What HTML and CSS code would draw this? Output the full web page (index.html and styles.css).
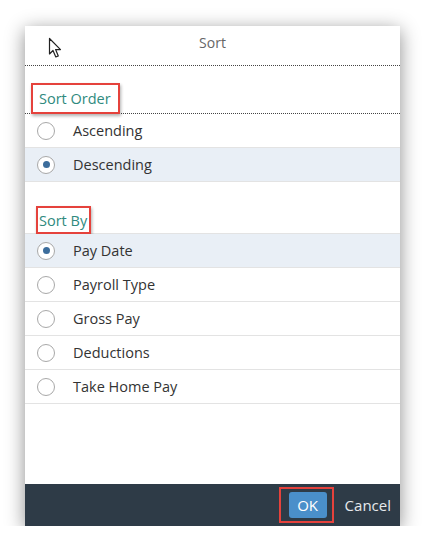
FILE: index.html
```html
<!DOCTYPE html>
<html lang="en">
<head>
    <meta charset="UTF-8">
    <title>Sort</title>
    <link rel="stylesheet" href="styles.css">
</head>
<body>
    <div class="dialogo">
        <div class="cabecera">
            <svg class="puntero" width="16" height="22" viewBox="0 0 16 22">
                <path d="M1.5 1.5 L1.5 17 L5 13.5 L7.8 20 L10.3 18.9 L7.6 12.6 L12.5 12.6 Z" fill="#fff" stroke="#222" stroke-width="1.2" stroke-linejoin="round"/>
            </svg>
            <span class="titulo">Sort</span>
        </div>

        <div class="seccion primera">
            <span class="etiqueta marcada">Sort Order</span>
        </div>
        <div class="fila"><span class="radio"></span>Ascending</div>
        <div class="fila activa"><span class="radio on"></span>Descending</div>

        <div class="seccion segunda">
            <span class="etiqueta marcada">Sort By</span>
        </div>
        <div class="fila activa"><span class="radio on"></span>Pay Date</div>
        <div class="fila"><span class="radio"></span>Payroll Type</div>
        <div class="fila"><span class="radio"></span>Gross Pay</div>
        <div class="fila"><span class="radio"></span>Deductions</div>
        <div class="fila"><span class="radio"></span>Take Home Pay</div>

        <div class="relleno"></div>

        <div class="pie">
            <div class="marco-ok"><button class="boton-ok">OK</button></div>
            <button class="boton-cancelar">Cancel</button>
        </div>
    </div>
</body>
</html>
```
FILE: styles.css
```css
body {
    margin: 0;
    background: #ffffff;
    font-family: "Open Sans", "Noto Sans", sans-serif;
}

.dialogo {
    margin: 26px 0 0 25px;
    width: 375px;
    height: 500px;
    background: #ffffff;
    box-shadow: 0 4px 18px rgba(0, 0, 0, 0.45);
    display: flex;
    flex-direction: column;
}

.cabecera {
    height: 39px;
    display: flex;
    align-items: center;
    justify-content: center;
    border-bottom: 1px dotted #444;
    position: relative;
}

.puntero {
    position: absolute;
    left: 23px;
    top: 11px;
}

.titulo {
    font-size: 14px;
    color: #666;
    margin-top: -7px;
}

.seccion {
    display: flex;
    align-items: flex-end;
    padding-left: 6px;
    border-bottom: 1px dotted #444;
}

.seccion.primera {
    height: 47px;
}

.seccion.segunda {
    height: 51px;
    border-bottom: 1px solid #e3e3e3;
    padding-left: 11px;
}

.etiqueta {
    font-size: 14.5px;
    color: #2f8a7e;
}

.marcada {
    border: 2px solid #e5423c;
    padding: 4px 7px 4px 6px;
    box-shadow: 1px 2px 3px rgba(0, 0, 0, 0.3);
    margin-bottom: -1px;
}

.segunda .marcada {
    padding: 3px 2px 2px 1px;
}

.fila {
    height: 33px;
    display: flex;
    align-items: center;
    font-size: 14.5px;
    color: #333;
    border-bottom: 1px solid #e3e3e3;
}

.fila.activa {
    background: #e9eff6;
}

.radio {
    width: 16px;
    height: 16px;
    border: 1.5px solid #a8a8a8;
    border-radius: 50%;
    background: #fff;
    margin: 0 18px 0 12px;
    display: flex;
    align-items: center;
    justify-content: center;
}

.radio.on::after {
    content: "";
    width: 7px;
    height: 7px;
    border-radius: 50%;
    background: #3c6d9c;
}

.relleno {
    flex: 1;
}

.pie {
    height: 42px;
    background: #2e3b47;
    display: flex;
    align-items: center;
    justify-content: flex-end;
    padding-right: 9px;
}

.marco-ok {
    border: 2px solid #e5423c;
    padding: 3px 5px 3px 8px;
    display: flex;
    margin-right: 11px;
}

.boton-ok {
    background: #4a8fca;
    border: 0;
    border-radius: 3px;
    color: #fff;
    font-family: inherit;
    font-size: 15px;
    width: 38px;
    height: 26px;
    padding: 0;
}

.boton-cancelar {
    background: none;
    border: 0;
    color: #e6e9ec;
    font-family: inherit;
    font-size: 15px;
    padding: 0;
}
```
